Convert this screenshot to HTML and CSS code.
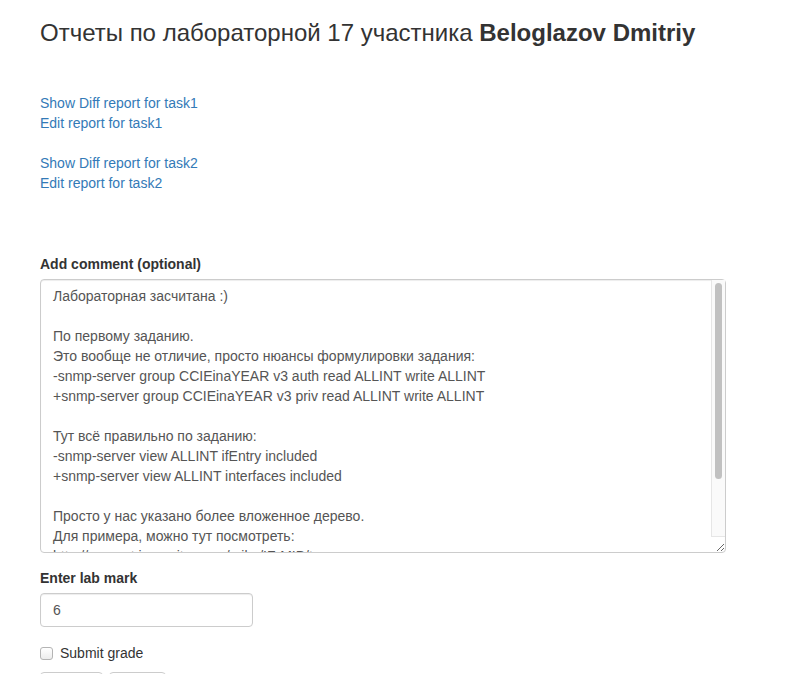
FILE: index.html
```html
<!DOCTYPE html>
<html lang="ru">
<head>
<meta charset="utf-8">
<title>Отчеты по лабораторной</title>
<link rel="stylesheet" href="styles.css">
</head>
<body>
<div class="container">
  <h3 class="title">Отчеты по лабораторной 17 участника <b>Beloglazov Dmitriy</b></h3>

  <div class="reports">
    <div class="task">
      <a href="#">Show Diff report for task1</a>
      <a href="#">Edit report for task1</a>
    </div>
    <div class="task">
      <a href="#">Show Diff report for task2</a>
      <a href="#">Edit report for task2</a>
    </div>
  </div>

  <form class="grade-form">
    <div class="form-group">
      <label class="label" for="comment">Add comment (optional)</label>
      <div class="comment-wrap">
        <textarea id="comment" class="comment">Лабораторная засчитана :)

По первому заданию.
Это вообще не отличие, просто нюансы формулировки задания:
-snmp-server group CCIEinaYEAR v3 auth read ALLINT write ALLINT
+snmp-server group CCIEinaYEAR v3 priv read ALLINT write ALLINT

Тут всё правильно по заданию:
-snmp-server view ALLINT ifEntry included
+snmp-server view ALLINT interfaces included

Просто у нас указано более вложенное дерево.
Для примера, можно тут посмотреть:
http://support.ipmonitor.com/mibs/IF-MIB/tree.aspx

По второму заданию.
Всё правильно.</textarea>
        <div class="scrollbar"><div class="thumb"></div></div>
      </div>
    </div>
    <div class="form-group">
      <label class="label" for="mark">Enter lab mark</label>
      <input id="mark" class="mark" type="text" value="6">
    </div>
    <div class="checkbox">
      <label><input type="checkbox" class="check"> Submit grade</label>
    </div>
    <div class="buttons">
      <button type="submit" class="btn">Submit</button>
      <button type="button" class="btn">Back</button>
    </div>
  </form>
</div>
</body>
</html>
```
FILE: styles.css
```css
html, body {
  margin: 0;
  padding: 0;
  background: #fff;
}
body {
  font-family: "Liberation Sans", Arial, sans-serif;
  font-size: 14px;
  line-height: 20px;
  color: #333;
  overflow: hidden;
}
.container {
  padding: 0 40px;
}
.title {
  margin: 20px 0 0;
  font-size: 24px;
  font-weight: 400;
  line-height: 26px;
  color: #333;
}
.title b {
  font-weight: 700;
}
.reports {
  margin-top: 47px;
  display: flex;
  flex-direction: column;
  gap: 20px;
}
.task {
  display: flex;
  flex-direction: column;
}
.task a {
  color: #337ab7;
  text-decoration: none;
  align-self: flex-start;
}
.grade-form {
  margin-top: 61px;
}
.form-group {
  margin-bottom: 15px;
}
.label {
  display: block;
  font-weight: 700;
  margin-bottom: 5px;
}
.comment-wrap {
  position: relative;
  width: 686px;
}
.comment {
  display: block;
  box-sizing: border-box;
  width: 686px;
  height: 274px;
  margin: 0;
  padding: 6px 12px;
  border: 1px solid #ccc;
  border-radius: 4px;
  font-family: "Liberation Sans", Arial, sans-serif;
  font-size: 14px;
  line-height: 20px;
  color: #555;
  resize: vertical;
  overflow: hidden;
  box-shadow: inset 0 1px 1px rgba(0,0,0,0.075);
}
.scrollbar {
  position: absolute;
  top: 1px;
  right: 1px;
  bottom: 16px;
  width: 13px;
  background: #fafafa;
  border-left: 1px solid #e6e6e6;
  border-bottom: 1px solid #e6e6e6;
  pointer-events: none;
}
.thumb {
  position: absolute;
  top: 3px;
  left: 3px;
  width: 7px;
  height: 196px;
  border-radius: 4px;
  background: #c1c1c1;
}
.mark {
  display: block;
  box-sizing: border-box;
  width: 213px;
  height: 34px;
  margin: 0;
  padding: 6px 12px;
  border: 1px solid #ccc;
  border-radius: 4px;
  font-family: "Liberation Sans", Arial, sans-serif;
  font-size: 14px;
  color: #555;
  box-shadow: inset 0 1px 1px rgba(0,0,0,0.075);
}
.checkbox {
  margin: 16px 0 9px;
}
.checkbox label {
  display: flex;
  align-items: center;
  gap: 7px;
}
.check {
  appearance: none;
  -webkit-appearance: none;
  width: 13px;
  height: 13px;
  margin: 0;
  border: 1px solid #b4b4b4;
  border-radius: 3px;
  background: linear-gradient(#fff, #ececec);
}
.buttons {
  display: flex;
  gap: 6px;
}
.btn {
  width: 63px;
  height: 34px;
  padding: 8px 0 0;
  border: 1px solid #ccc;
  border-radius: 4px;
  background: #fff;
  font-family: "Liberation Sans", Arial, sans-serif;
  font-size: 14px;
  color: #333;
}
.btn + .btn {
  width: 57px;
}
```
